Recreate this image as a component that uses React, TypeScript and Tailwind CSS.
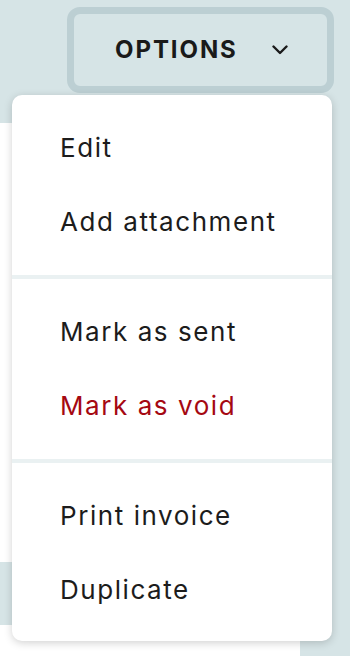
import React from "react";

const groups: { label: string; danger?: boolean }[][] = [
  [{ label: "Edit" }, { label: "Add attachment" }],
  [{ label: "Mark as sent" }, { label: "Mark as void", danger: true }],
  [{ label: "Print invoice" }, { label: "Duplicate" }],
];

export default function App() {
  return (
    <div
      className="relative h-[656px] w-[350px] overflow-hidden bg-[#d6e4e6]"
      style={{ fontFamily: "Inter, 'Noto Sans', sans-serif" }}
    >
      <div className="flex justify-end pt-[7px] pr-[16px]">
        <button className="flex h-[86px] w-[267px] items-center gap-[34px] rounded-[13px] border-[7px] border-[#bccfd3] bg-[#d6e4e6] pl-[41px] text-[#1a1a1a]">
          <span className="text-[24px] font-bold leading-none tracking-[0.08em]">OPTIONS</span>
          <svg width="16" height="10" viewBox="0 0 16 10" fill="none">
            <path d="M1.5 1.5 L8 8 L14.5 1.5" stroke="#1a1a1a" strokeWidth="2.4" strokeLinecap="round" strokeLinejoin="round" />
          </svg>
        </button>
      </div>
      <div className="mt-[30px] h-[439px] w-[300px] bg-white" />
      <div className="mt-[63px] h-[40px] w-[300px] bg-white" />

      <div className="absolute left-[12px] top-[95px] w-[320px] overflow-hidden rounded-[10px] bg-white shadow-[0_2px_8px_rgba(0,0,0,0.18)]">
        {groups.map((g, gi) => (
          <div key={gi} className={gi > 0 ? "border-t-4 border-[#eaf1f2]" : ""}>
            <div className={gi === 2 ? "pt-4 pb-[14px]" : "py-4"}>
              {g.map((item) => (
                <div
                  key={item.label}
                  className={`flex h-[74px] items-center pl-[48px] text-[26px] leading-none tracking-[0.06em] ${
                    item.danger ? "text-[#a50812]" : "text-[#1c1c1c]"
                  }`}
                >
                  {item.label}
                </div>
              ))}
            </div>
          </div>
        ))}
      </div>
    </div>
  );
}
